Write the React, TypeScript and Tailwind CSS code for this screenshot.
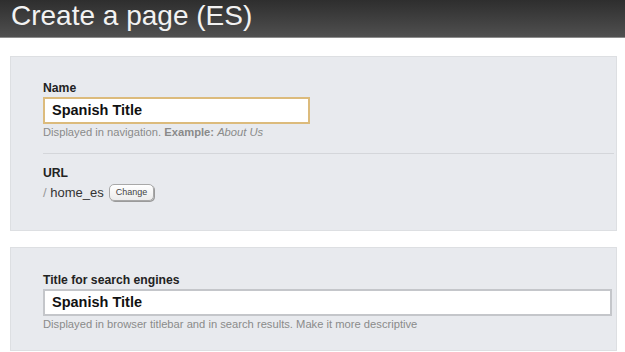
import React from 'react';

const Field = ({
  label,
  value,
  focused,
  width,
  children,
}: {
  label: string;
  value: string;
  focused?: boolean;
  width: string;
  children: React.ReactNode;
}) => (
  <div>
    <div className="text-[12.2px] font-bold leading-[16px] text-[#222]">{label}</div>
    <div
      className={`mt-[1px] flex h-[27px] items-center bg-white px-[7px] text-[14.5px] font-bold text-[#111] ${width} ${
        focused ? 'border-2 border-[#dcbb7c]' : 'border-2 border-[#c4c6ca]'
      }`}
    >
      {value}
    </div>
    <div className="mt-[1px] text-[11.2px] leading-[14px] text-[#8a8a8a]">{children}</div>
  </div>
);

export default function App() {
  return (
    <div className="h-[352px] w-[625px] overflow-hidden bg-white font-['Liberation_Sans',Arial,sans-serif]">
      <div className="h-[38px] border-b border-[#8c8c8c] bg-gradient-to-b from-[#2e2e2e] to-[#505050] pl-[11px]">
        <h1 className="text-[28px] leading-[31px] text-[#f2f2f2]">Create a page (ES)</h1>
      </div>

      <div className="flex flex-col gap-[16px] pl-[10px] pr-[8px] pt-[18px]">
        <div className="h-[175px] border border-[#dddfe2] bg-[#e8eaee] pl-[32px] pr-[2px] pt-[23px]">
          <Field label="Name" value="Spanish Title" focused width="w-[267px]">
            Displayed in navigation. <span className="font-bold">Example:</span>{' '}
            <span className="italic">About Us</span>
          </Field>

          <div className="mt-[14px] border-t border-[#d4d6da]" />

          <div className="mt-[11px] text-[12.2px] font-bold leading-[16px] text-[#222]">URL</div>
          <div className="mt-[2px] flex items-center gap-[5px] text-[13px] text-[#333]">
            <span>
              <span className="text-[#999]">/</span> home_es
            </span>
            <span className="flex h-[17px] items-center rounded-[5px] border border-[#a8a8a8] bg-gradient-to-b from-white to-[#ececec] px-[6px] text-[9px] text-[#444] shadow-[1px_1px_0_#9a9a9a]">
              Change
            </span>
          </div>
        </div>

        <div className="h-[104px] border border-[#dddfe2] bg-[#e8eaee] pl-[32px] pt-[24px]">
          <Field label="Title for search engines" value="Spanish Title" width="w-[569px]">
            Displayed in browser titlebar and in search results. Make it more descriptive
          </Field>
        </div>
      </div>
    </div>
  );
}
